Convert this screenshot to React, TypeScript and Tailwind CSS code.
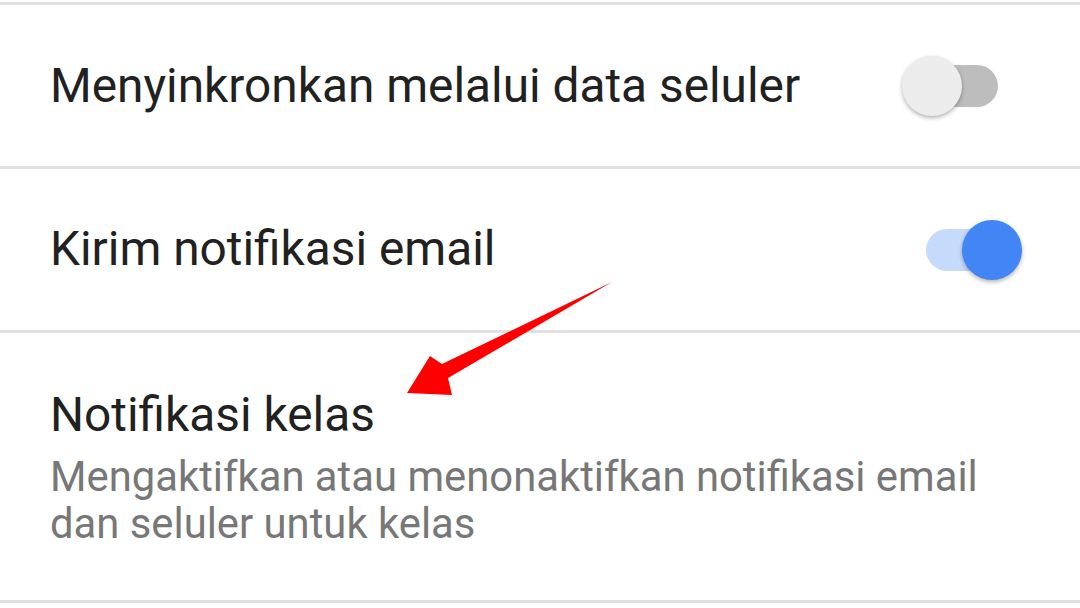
import React from "react";

function Switch({ on }: { on: boolean }) {
  return (
    <div className="relative w-[72px] h-[42px] mr-[82px]">
      <div className={`absolute inset-0 rounded-full ${on ? "bg-[#c6dafc]" : "bg-[#bdbdbd]"}`} />
      <div
        className={`absolute top-[-9px] w-[60px] h-[60px] rounded-full shadow-[0_2px_4px_rgba(0,0,0,0.3)] ${
          on ? "left-[36px] bg-[#4285f4]" : "left-[-24px] bg-[#ececec]"
        }`}
      />
    </div>
  );
}

function Divider() {
  return <div className="h-[3px] bg-[#e0e0e0]" />;
}

export default function App() {
  return (
    <div
      className="relative w-[1080px] h-[608px] bg-white overflow-hidden pt-[2px]"
      style={{ fontFamily: "Roboto, 'Noto Sans', sans-serif" }}
    >
      <Divider />
      <div className="h-[161px] flex items-center justify-between pl-[50px]">
        <span className="text-[47.8px] text-[#212121] leading-none pt-[2px]">Menyinkronkan melalui data seluler</span>
        <Switch on={false} />
      </div>
      <Divider />
      <div className="h-[161px] flex items-center justify-between pl-[50px]">
        <span className="text-[47.8px] text-[#212121] leading-none">Kirim notifikasi email</span>
        <Switch on={true} />
      </div>
      <Divider />
      <div className="h-[267px] pl-[50px] pt-[54px]">
        <div className="text-[47.8px] text-[#212121] leading-[56px]">Notifikasi kelas</div>
        <div className="text-[41.8px] text-[#777777] leading-[47px] mt-[10px] w-[960px]">
          Mengaktifkan atau menonaktifkan notifikasi email dan seluler untuk kelas
        </div>
      </div>
      <Divider />
      <svg className="absolute left-0 top-0" width="1080" height="608" viewBox="0 0 1080 608">
        <polygon
          points="612,282 442,364 430,356 407,393 452,395 448,378"
          fill="#ff0000"
        />
      </svg>
    </div>
  );
}
